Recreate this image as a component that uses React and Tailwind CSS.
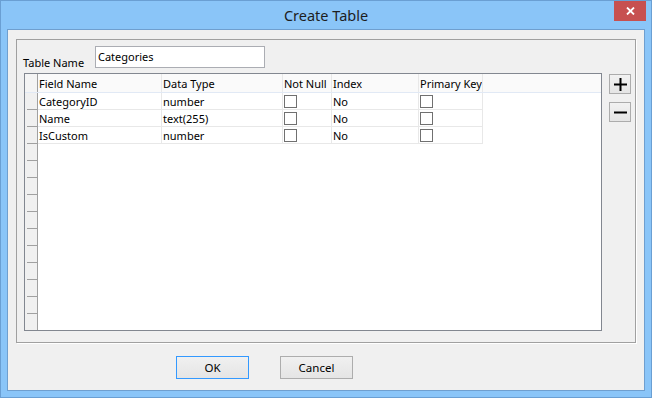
const COLS = [
  { key: "name", label: "Field Name", w: "w-[124px]" },
  { key: "type", label: "Data Type", w: "w-[121px]" },
  { key: "notNull", label: "Not Null", w: "w-[49px]", check: true },
  { key: "index", label: "Index", w: "w-[87px]" },
  { key: "pk", label: "Primary Key", w: "w-[64px]", check: true },
];

const ROWS = [
  { name: "CategoryID", type: "number", index: "No" },
  { name: "Name", type: "text(255)", index: "No" },
  { name: "IsCustom", type: "number", index: "No" },
];

const EMPTY_ROWS = 11;

const Checkbox = () => (
  <div className="w-[13px] h-[13px] border border-[#707070] bg-white" />
);

const RowHead = () => (
  <div className="w-[13px] h-[17px] shrink-0 bg-[#f0f0f0] border-r border-[#a0a0a0] flex flex-col justify-end">
    <div className="h-px w-[10px] ml-[2px] bg-[#a0a0a0]" />
  </div>
);

const SmallButton = ({ children }) => (
  <button className="w-[22px] h-[20px] border border-[#acacac] bg-gradient-to-b from-[#f2f2f2] to-[#e5e5e5] flex items-center justify-center">
    {children}
  </button>
);

const DialogButton = ({ label, focused }) => (
  <button
    className={
      focused
        ? "w-[73px] h-[23px] border border-[#3399ff] bg-gradient-to-b from-[#f0f0f0] to-[#e5e5e5] text-[11.5px] text-black"
        : "w-[73px] h-[23px] border border-[#adadad] bg-gradient-to-b from-[#f0f0f0] to-[#e5e5e5] text-[11.5px] text-black"
    }
  >
    {label}
  </button>
);

const App = () => {
  return (
    <div className="w-[652px] h-[398px] border border-[#6a9fd3] bg-[#8ac5f8] flex flex-col font-['Segoe_UI','Noto_Sans',sans-serif] text-[11px] text-black select-none">
      {/* title bar */}
      <div className="h-[28px] relative flex items-center justify-center">
        <span className="text-[14.5px] text-[#1e1e1e] leading-none">Create Table</span>
        <button className="absolute right-[5px] top-0 w-[32px] h-[20px] bg-[#c75050] flex items-center justify-center">
          <svg width="9" height="8" viewBox="0 0 9 8">
            <path d="M1 0.5 L8 7.5 M8 0.5 L1 7.5" stroke="#fff" strokeWidth="1.8" />
          </svg>
        </button>
      </div>

      {/* client area */}
      <div className="mx-[6px] h-[362px] border border-[#6f9fcf] bg-[#f0f0f0] flex flex-col">
        <div className="ml-[8px] mt-[9px] w-[620px] h-[304px] border border-[#a0a0a0] shadow-[1px_1px_0_#fff] flex flex-col">
          {/* table name */}
          <div className="flex items-end h-[28px] pl-[6px]">
            <span className="w-[72px] mb-[-3px]">Table Name</span>
            <div className="w-[170px] h-[22px] border border-[#abadb3] bg-white flex items-center px-[2px]">
              Categories
            </div>
          </div>

          <div className="flex mt-[5px] ml-[7px]">
            {/* grid */}
            <div className="w-[578px] h-[258px] border border-[#828790] bg-white overflow-hidden flex flex-col">
              {/* header */}
              <div className="flex h-[19px] shrink-0 bg-[#fafafa] border-b border-[#e1e9f5]">
                <div className="w-[13px] shrink-0 bg-[#f4f4f4] border-r border-[#a0a0a0]" />
                {COLS.map((c) => (
                  <div
                    key={c.key}
                    className={`${c.w} shrink-0 border-r border-[#e8e8e8] pl-[1px] pt-[1px] leading-[18px] whitespace-nowrap overflow-hidden`}
                  >
                    {c.label}
                  </div>
                ))}
              </div>

              {ROWS.map((r, i) => (
                <div key={i} className="flex h-[17px] shrink-0">
                  <RowHead />
                  {COLS.map((c) => (
                    <div
                      key={c.key}
                      className={`${c.w} shrink-0 border-r border-b border-[#e8e8e8] pl-[1px] flex items-center whitespace-nowrap overflow-hidden`}
                    >
                      {c.check ? <Checkbox /> : <span className="leading-[16px] pt-[1px]">{r[c.key]}</span>}
                    </div>
                  ))}
                </div>
              ))}

              {Array.from({ length: EMPTY_ROWS }).map((_, i) => (
                <div key={`e${i}`} className="flex h-[17px] shrink-0">
                  <RowHead />
                </div>
              ))}
              <div className="flex-1 flex">
                <div className="w-[13px] bg-[#f0f0f0] border-r border-[#a0a0a0]" />
              </div>
            </div>

            {/* add / remove */}
            <div className="ml-[7px] mt-[1px] flex flex-col gap-[8px]">
              <SmallButton>
                <svg width="13" height="13" viewBox="0 0 13 13">
                  <path d="M0 6.5 H13 M6.5 0 V13" stroke="#000" strokeWidth="2" />
                </svg>
              </SmallButton>
              <SmallButton>
                <svg width="13" height="13" viewBox="0 0 13 13">
                  <path d="M0 6.5 H13" stroke="#000" strokeWidth="2" />
                </svg>
              </SmallButton>
            </div>
          </div>
        </div>

        {/* dialog buttons */}
        <div className="flex mt-[13px] ml-[168px] gap-[31px]">
          <DialogButton label="OK" focused />
          <DialogButton label="Cancel" />
        </div>
      </div>
    </div>
  );
};

export default App;
